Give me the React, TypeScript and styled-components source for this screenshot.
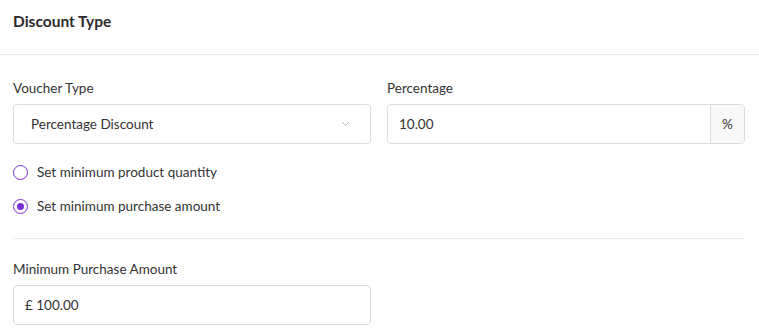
import React, { useState } from 'react';
import styled, { createGlobalStyle } from 'styled-components';

const GlobalStyle = createGlobalStyle`
  body {
    margin: 0;
    background: #ffffff;
    font-family: Lato, "Noto Sans", sans-serif;
    color: #333333;
  }
`;

const Card = styled.div`
  width: 759px;
  background: #ffffff;
`;

const Header = styled.div`
  padding: 12px 13px 24px;
  border-bottom: 1px solid #ececec;
`;

const Title = styled.h2`
  margin: 0;
  font-size: 15.5px;
  line-height: 18px;
  font-weight: 700;
  color: #2b2b2b;
`;

const Body = styled.div`
  padding: 25px 15px 0 13px;
`;

const FieldGrid = styled.div`
  display: grid;
  grid-template-columns: 358px 358px;
  column-gap: 16px;
`;

const Field = styled.div`
  display: flex;
  flex-direction: column;
  width: 358px;
`;

const Label = styled.label`
  font-size: 13.5px;
  line-height: 16px;
  margin-bottom: 8px;
  color: #333333;
`;

const Box = styled.div`
  display: flex;
  align-items: center;
  height: 40px;
  box-sizing: border-box;
  border: 1px solid #dcdcdc;
  border-radius: 4px;
  font-size: 13.5px;
  color: #333333;
  overflow: hidden;
`;

const SelectText = styled.span`
  flex: 1;
  padding-left: 17px;
`;

const Chevron = styled.svg`
  margin-right: 20px;
`;

const InputText = styled.span<{ $pad?: number }>`
  flex: 1;
  padding-left: ${(p) => p.$pad ?? 11}px;
`;

const Addon = styled.span`
  width: 33px;
  height: 100%;
  display: flex;
  align-items: center;
  justify-content: center;
  background: #f8f8f8;
  border-left: 1px solid #dcdcdc;
  font-size: 13.5px;
`;

const RadioList = styled.div`
  display: flex;
  flex-direction: column;
  gap: 14px;
  margin-top: 18px;
`;

const RadioRow = styled.div`
  display: flex;
  align-items: center;
  gap: 9px;
  height: 20px;
  font-size: 13.5px;
  cursor: pointer;
`;

const RadioCircle = styled.span<{ $checked: boolean }>`
  width: 15px;
  height: 15px;
  box-sizing: border-box;
  border-radius: 50%;
  border: 1.5px solid #7b2ed6;
  display: flex;
  align-items: center;
  justify-content: center;
  &::after {
    content: '';
    width: 7px;
    height: 7px;
    border-radius: 50%;
    background: ${(p) => (p.$checked ? '#7b2ed6' : 'transparent')};
  }
`;

const Divider = styled.hr`
  border: none;
  border-top: 1px solid #ececec;
  margin: 22px 0 22px;
`;

const App = () => {
  const [mode, setMode] = useState('amount');

  return (
    <Card>
      <GlobalStyle />
      <Header>
        <Title>Discount Type</Title>
      </Header>
      <Body>
        <FieldGrid>
          <Field>
            <Label>Voucher Type</Label>
            <Box>
              <SelectText>Percentage Discount</SelectText>
              <Chevron width="9" height="6" viewBox="0 0 9 6">
                <path d="M1 1l3.5 3.5L8 1" fill="none" stroke="#b8b8b8" strokeWidth="1" />
              </Chevron>
            </Box>
          </Field>
          <Field>
            <Label>Percentage</Label>
            <Box>
              <InputText>10.00</InputText>
              <Addon>%</Addon>
            </Box>
          </Field>
        </FieldGrid>
        <RadioList>
          <RadioRow onClick={() => setMode('quantity')}>
            <RadioCircle $checked={mode === 'quantity'} />
            Set minimum product quantity
          </RadioRow>
          <RadioRow onClick={() => setMode('amount')}>
            <RadioCircle $checked={mode === 'amount'} />
            Set minimum purchase amount
          </RadioRow>
        </RadioList>
        <Divider />
        <Field>
          <Label>Minimum Purchase Amount</Label>
          <Box>
            <InputText>£ 100.00</InputText>
          </Box>
        </Field>
      </Body>
    </Card>
  );
};

export default App;
